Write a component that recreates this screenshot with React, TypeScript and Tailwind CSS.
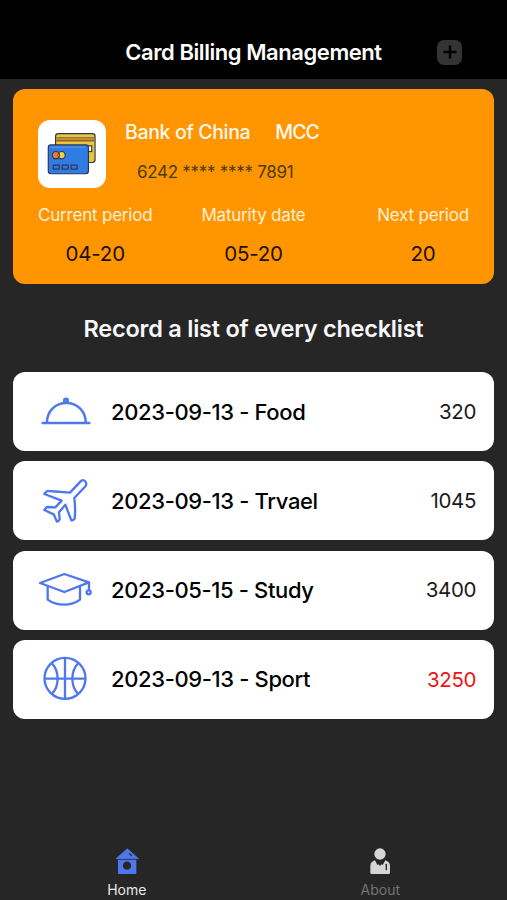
import type { ReactNode } from 'react';

type RecordItem = {
  date: string;
  label: string;
  amount: number;
  icon: ReactNode;
  over?: boolean;
};

function FoodIcon() {
  return (
    <svg viewBox="15 6 180 180" className="size-[60px]" fill="none" stroke="#5078ee" strokeWidth="7.500" strokeLinecap="round" strokeLinejoin="round">
      <path d="M38 129H178" />
      <path d="M51 127C51 93 77 69 109 69S167 93 167 127" />
      <circle cx="108" cy="62" r="5.500" fill="#6f90f2" />
    </svg>
  );
}

function TravelIcon() {
  return (
    <svg viewBox="15 3 180 180" className="size-[60px]" fill="none" stroke="#5078ee" strokeWidth="7" strokeLinecap="round" strokeLinejoin="round">
      <path d="M154 32L120 68L56 63Q51 62 48 66L43 72L95 92L76 112L53 111Q49 111 47 115L43 120L71 133L81 155Q86 155 89 148L87 127L106 104L124 151Q130 152 134 146Q137 118 133 84L167 48Q171 41 166 34Q160 28 154 32Z" />
    </svg>
  );
}

function StudyIcon() {
  return (
    <svg viewBox="15 2 180 180" className="size-[60px]" fill="none" stroke="#5078ee" strokeWidth="7" strokeLinejoin="round">
      <path d="M30 71L103 44L177 69L103 98Z" />
      <path d="M53 80V121Q74 136 102 136T150 121V80" />
      <path d="M177 69V93" />
      <circle cx="176" cy="99" r="6" />
    </svg>
  );
}

function SportIcon() {
  return (
    <svg viewBox="15 15 180 180" className="size-[60px]" fill="none" stroke="#5078ee" strokeWidth="7">
      <circle cx="105" cy="103" r="61.500" />
      <path d="M105 42V165M43 104H167" />
      <path d="M65 57Q83 76 83 104T65 150M145 57Q127 76 127 104T145 150" />
    </svg>
  );
}

function CardsIcon() {
  return (
    <svg viewBox="24 29 205 205" className="size-full" stroke="#2c3550" strokeWidth="3.500">
      <rect x="77" y="70" width="119" height="87" rx="8" fill="#e8c63c" />
      <path d="M79 83H194" stroke="#5b4630" strokeWidth="3" />
      <path d="M79 91H194" stroke="#a4582c" strokeWidth="6" />
      <rect x="168" y="107" width="18" height="17" fill="#fff" />
      <rect x="55" y="104" width="121" height="87" rx="8" fill="#2f7de4" />
      <path d="M62 111H166" stroke="#5b9df2" strokeWidth="3" />
      <circle cx="95" cy="135" r="11" fill="#f4cf45" />
      <circle cx="78" cy="135" r="11" fill="#ee7b35" />
      <path d="M86 128Q92 135 86 142Q81 135 86 128Z" fill="#f7a93c" strokeWidth="2" />
      <g fill="#347bd8">
        <rect x="70" y="165" width="18" height="12" />
        <rect x="97" y="165" width="18" height="12" />
        <rect x="124" y="165" width="18" height="12" />
      </g>
    </svg>
  );
}

function HomeIcon() {
  return (
    <svg viewBox="36 21 90 90" className="size-[30px]">
      <path d="M82 26L116 56H48Z" fill="#4f77ec" stroke="#4f77ec" strokeWidth="2" strokeLinejoin="round" />
      <path d="M54 59H109V99Q109 102 106 102H57Q54 102 54 99Z" fill="#4f77ec" />
      <path d="M87 40L96 48" stroke="#262626" strokeWidth="3.500" />
      <circle cx="81" cy="77" r="12.500" fill="#262626" />
    </svg>
  );
}

function AboutIcon() {
  return (
    <svg viewBox="45 21 90 90" className="size-[30px]">
      <circle cx="90" cy="42" r="17" fill="#d5d5d5" />
      <path d="M75 61L82 75L86 73L90 78L94 73L98 75L106 61Q120 66 120 77V98Q120 102 116 102H65Q61 102 61 98V77Q61 66 75 61Z" fill="#d5d5d5" />
      <path d="M109 73V89" stroke="#262626" strokeWidth="4" strokeLinecap="round" />
    </svg>
  );
}

const records: RecordItem[] = [
  { date: '2023-09-13', label: 'Food', amount: 320, icon: <FoodIcon /> },
  { date: '2023-09-13', label: 'Trvael', amount: 1045, icon: <TravelIcon /> },
  { date: '2023-05-15', label: 'Study', amount: 3400, icon: <StudyIcon /> },
  { date: '2023-09-13', label: 'Sport', amount: 3250, icon: <SportIcon />, over: true },
];

const periods = [
  { label: 'Current period', value: '04-20' },
  { label: 'Maturity date', value: '05-20' },
  { label: 'Next period', value: '20' },
];

export default function App() {
  return (
    <div className="flex h-[900px] w-full flex-col overflow-hidden bg-[#262626] font-['Inter',sans-serif]">
      <header className="grid h-[79px] shrink-0 grid-cols-[1fr_auto_1fr] items-center bg-black pt-[25px]">
        <h1 className="col-start-2 text-[22px] font-semibold tracking-[-0.44px] text-white">Card Billing Management</h1>
        <button type="button" className="mr-[45px] flex size-[25px] items-center justify-center justify-self-end rounded-[7px] bg-[#343434]">
          <svg viewBox="0 0 14 14" className="size-[14px]" stroke="#000" strokeWidth="2.500">
            <path d="M7 .5V13.500M.5 7H13.500" />
          </svg>
        </button>
      </header>

      <main className="flex flex-col px-[13px] pt-[10px]">
        <section className="h-[195px] rounded-xl bg-[#ff9500] px-[25px] pt-[31px]">
          <div className="flex h-[68px]">
            <div className="size-[68px] overflow-hidden rounded-xl bg-white">
              <CardsIcon />
            </div>
            <div className="ml-[19px] flex flex-col">
              <div className="flex gap-[25px] text-[19.500px] leading-6 font-medium tracking-[-0.35px] text-[#fff8ec]">
                <span>Bank of China</span>
                <span className="tracking-[-0.9px]">MCC</span>
              </div>
              <p className="mt-[17px] ml-3 text-[17px] leading-[22px] tracking-[-0.28px] text-[#4b3d0c]">6242 **** **** 7891</p>
            </div>
          </div>
          <div className="mt-[15px] grid grid-cols-[1fr_auto_1fr]">
            {periods.map((period) => (
              <div key={period.label} className="flex flex-col items-center first:justify-self-start last:justify-self-end">
                <p className="text-[17px] leading-6 tracking-[-0.2px] text-[#fff0d6]">{period.label}</p>
                <p className="mt-[15px] text-[20.500px] leading-6 tracking-[-0.2px] text-[#1c1000]">{period.value}</p>
              </div>
            ))}
          </div>
        </section>

        <h2 className="mt-[30px] text-center text-[23.500px] leading-[30px] font-semibold tracking-[-0.23px] text-[#f7f7f7]">Record a list of every checklist</h2>

        <ul className="mt-7 flex flex-col gap-[10.300px]">
          {records.map((record) => (
            <li key={record.label} className="flex h-[79px] items-center rounded-xl bg-white pr-[18px] pl-[22px]">
              {record.icon}
              <span className="ml-4 flex-1 pt-px text-[22px] font-medium tracking-[-0.37px] text-black">
                {record.date} - {record.label}
              </span>
              <span className={`pt-px text-[20.500px] tracking-[-0.4px] ${record.over ? 'text-[#f01414]' : 'text-[#1a1a1a]'}`}>{record.amount}</span>
            </li>
          ))}
        </ul>
      </main>

      <nav className="mt-auto grid h-[53px] grid-cols-2 text-[14px] leading-5">
        <a className="flex flex-col items-center gap-[3px] text-[#e8e8e8]">
          <HomeIcon />
          Home
        </a>
        <a className="flex flex-col items-center gap-[3px] text-[#747474]">
          <AboutIcon />
          About
        </a>
      </nav>
    </div>
  );
}
